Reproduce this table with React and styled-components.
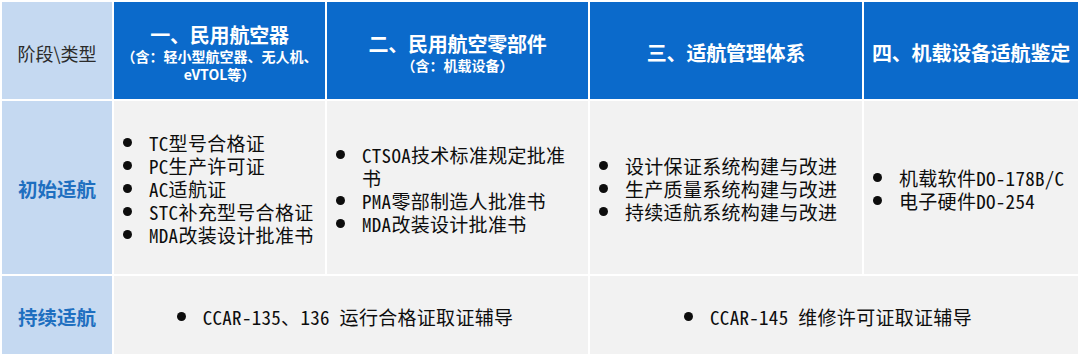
import React from 'react'
import styled, { createGlobalStyle } from 'styled-components'

const palette = {
  headBlue: '#0b6acb',
  stageBlue: '#c5d9f1',
  cell: '#f2f2f2',
  stageText: '#1e6fc0',
  ink: '#0d0d0d',
}

const Global = createGlobalStyle`
  html, body {
    margin: 0;
    padding: 0;
    background: #ffffff;
  }
`

const initial = [
  ['TC型号合格证', 'PC生产许可证', 'AC适航证', 'STC补充型号合格证', 'MDA改装设计批准书'],
  ['CTSOA技术标准规定批准书', 'PMA零部制造人批准书', 'MDA改装设计批准书'],
  ['设计保证系统构建与改进', '生产质量系统构建与改进', '持续适航系统构建与改进'],
  ['机载软件DO-178B/C', '电子硬件DO-254'],
]

export default () => {
  return (
    <>
      <Global />
      <Table>
        <Corner>阶段\类型</Corner>
        <Head>
          <Title>一、民用航空器</Title>
          <Sub>（含：轻小型航空器、无人机、<br />eVTOL等）</Sub>
        </Head>
        <Head>
          <Title>二、民用航空零部件</Title>
          <Sub>（含：机载设备）</Sub>
        </Head>
        <Head>
          <Title>三、适航管理体系</Title>
        </Head>
        <Head>
          <Title>四、机载设备适航鉴定</Title>
        </Head>

        <Stage>初始适航</Stage>
        {initial.map((list, i) => (
          <Cell key={i} narrow={i === 1}>
            <List>
              {list.map((t) => (
                <Item key={t}>
                  <Dot />
                  <span>{t}</span>
                </Item>
              ))}
            </List>
          </Cell>
        ))}

        <Stage>持续适航</Stage>
        <Cell span={2} center>
          <Item wide>
            <Dot />
            <span>CCAR-135、136 运行合格证取证辅导</span>
          </Item>
        </Cell>
        <Cell span={2} center>
          <Item wide>
            <Dot />
            <span>CCAR-145 维修许可证取证辅导</span>
          </Item>
        </Cell>
      </Table>
    </>
  )
}

const Table = styled.div`
  display: grid;
  grid-template-columns: 110px 211px 261px 272px 214px;
  grid-template-rows: 97px 173px 78px;
  gap: 2px;
  padding: 2px 2px 3px 2px;
  width: 1080px;
  box-sizing: border-box;
  background: #ffffff;
`
const Corner = styled.div`
  background: ${palette.stageBlue};
  display: flex;
  align-items: center;
  justify-content: center;
  padding-top: 4px;
  box-sizing: border-box;
  font-family: "Noto Sans CJK SC", sans-serif;
  font-size: 18px;
  color: #2b2b2b;
`
const Head = styled.div`
  background: ${palette.headBlue};
  color: #ffffff;
  display: flex;
  flex-direction: column;
  align-items: center;
  justify-content: center;
  padding-top: 4px;
  box-sizing: border-box;
  text-align: center;
  font-family: "Noto Sans CJK SC", sans-serif;
  font-weight: 700;
`
const Title = styled.div`
  font-size: 20px;
  line-height: 24px;
  letter-spacing: -0.2px;
`
const Sub = styled.div`
  font-size: 14px;
  line-height: 18px;
`
const Stage = styled.div`
  background: ${palette.stageBlue};
  color: ${palette.stageText};
  display: flex;
  align-items: center;
  justify-content: center;
  font-family: "Noto Sans CJK SC", sans-serif;
  font-weight: 700;
  font-size: 19.5px;
  padding-top: 2px;
  box-sizing: border-box;
`
const Cell = styled.div`
  background: ${palette.cell};
  grid-column: span ${(p) => p.span || 1};
  display: flex;
  align-items: center;
  justify-content: ${(p) => (p.center ? 'center' : 'flex-start')};
  padding: ${(p) => (p.center ? '2px 0 0 0' : p.narrow ? '2px 12px 0 9px' : '2px 2px 0 9px')};
  box-sizing: border-box;
  font-family: "Noto Sans Mono CJK SC", "Noto Sans CJK SC", monospace;
  font-size: 19px;
  letter-spacing: 0.3px;
  color: ${palette.ink};
`
const List = styled.div`
  display: flex;
  flex-direction: column;
`
const Item = styled.div`
  display: flex;
  align-items: flex-start;
  line-height: 23px;
  white-space: ${(p) => (p.wide ? 'nowrap' : 'normal')};
  margin-right: ${(p) => (p.wide ? '12px' : '0')};
`
const Dot = styled.i`
  flex: none;
  width: 9px;
  height: 9px;
  border-radius: 50%;
  background: ${palette.ink};
  margin: 7px 17px 0 0;
`
